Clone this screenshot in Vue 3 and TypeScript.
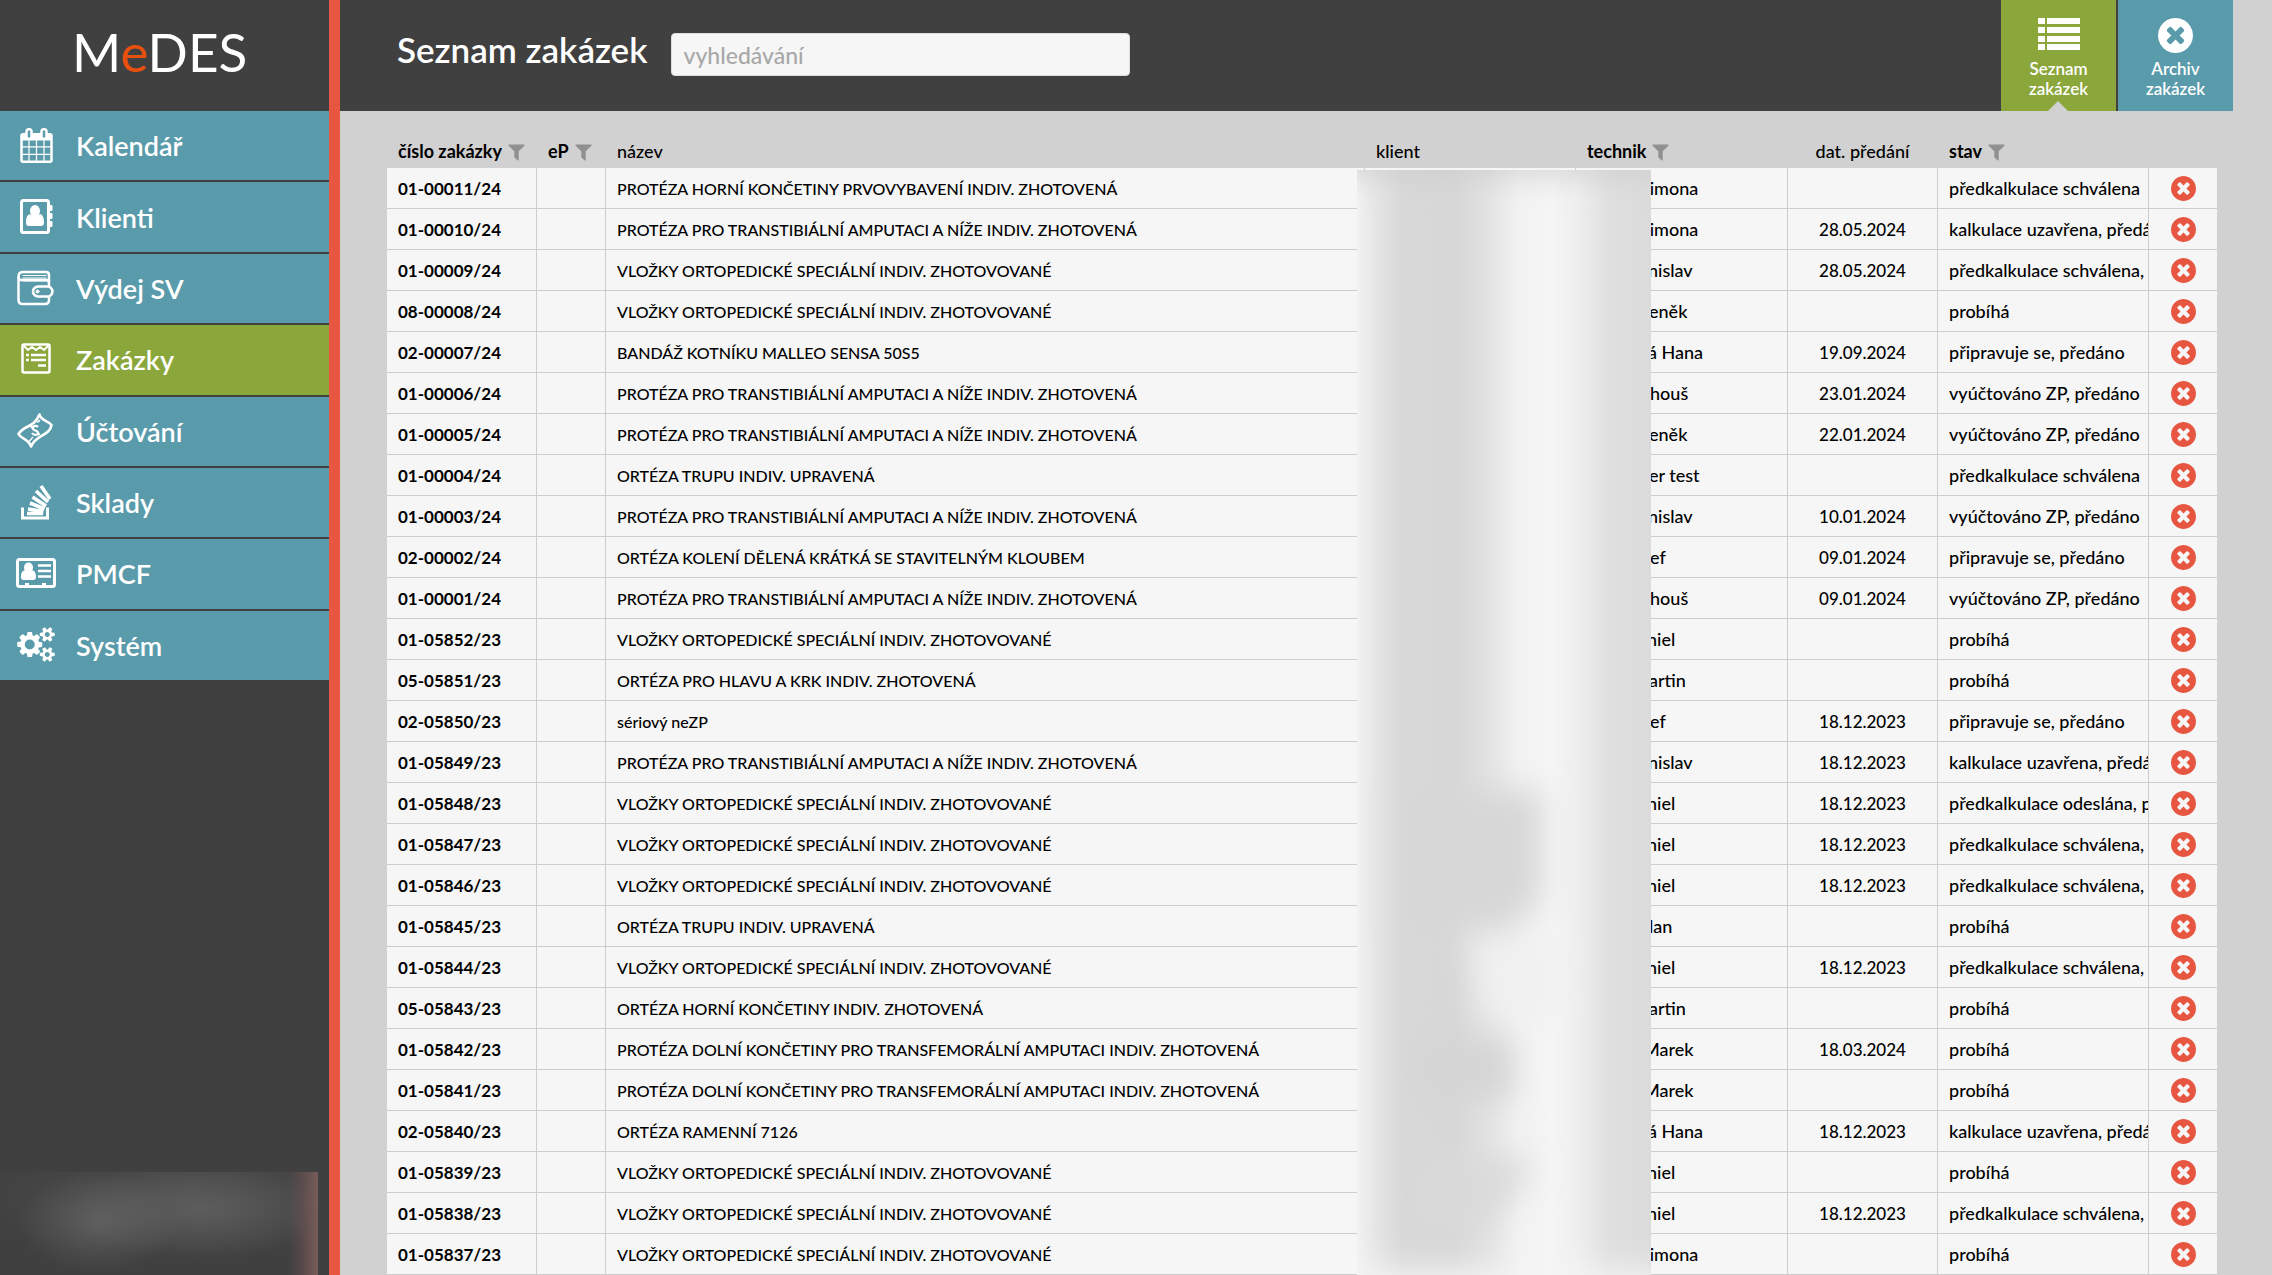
<script setup lang="ts">
import { ref } from 'vue'

interface Order {
  id: string
  name: string
  technician: string
  handover: string
  status: string
}

const TRANSTIBIAL = 'PROTÉZA PRO TRANSTIBIÁLNÍ AMPUTACI A NÍŽE INDIV. ZHOTOVENÁ'
const TRANSFEMORAL = 'PROTÉZA DOLNÍ KONČETINY PRO TRANSFEMORÁLNÍ AMPUTACI INDIV. ZHOTOVENÁ'
const INSOLES = 'VLOŽKY ORTOPEDICKÉ SPECIÁLNÍ INDIV. ZHOTOVOVANÉ'

// Width of the masked surname in front of each visible technician name.
const surnameWidth: Record<string, number> = {
  Simona: 53,
  nislav: 61,
  eněk: 62,
  'á Hana': 61,
  houš: 63,
  'er test': 62,
  ef: 63,
  niel: 60,
  artin: 62,
  lan: 62,
  Marek: 56,
}

const rows: [string, string, string, string, string][] = [
  ['01-00011/24', 'PROTÉZA HORNÍ KONČETINY PRVOVYBAVENÍ INDIV. ZHOTOVENÁ', 'Simona', '', 'předkalkulace schválena'],
  ['01-00010/24', TRANSTIBIAL, 'Simona', '28.05.2024', 'kalkulace uzavřena, předáno'],
  ['01-00009/24', INSOLES, 'nislav', '28.05.2024', 'předkalkulace schválena, předáno'],
  ['08-00008/24', INSOLES, 'eněk', '', 'probíhá'],
  ['02-00007/24', 'BANDÁŽ KOTNÍKU MALLEO SENSA 50S5', 'á Hana', '19.09.2024', 'připravuje se, předáno'],
  ['01-00006/24', TRANSTIBIAL, 'houš', '23.01.2024', 'vyúčtováno ZP, předáno'],
  ['01-00005/24', TRANSTIBIAL, 'eněk', '22.01.2024', 'vyúčtováno ZP, předáno'],
  ['01-00004/24', 'ORTÉZA TRUPU INDIV. UPRAVENÁ', 'er test', '', 'předkalkulace schválena'],
  ['01-00003/24', TRANSTIBIAL, 'nislav', '10.01.2024', 'vyúčtováno ZP, předáno'],
  ['02-00002/24', 'ORTÉZA KOLENÍ DĚLENÁ KRÁTKÁ SE STAVITELNÝM KLOUBEM', 'ef', '09.01.2024', 'připravuje se, předáno'],
  ['01-00001/24', TRANSTIBIAL, 'houš', '09.01.2024', 'vyúčtováno ZP, předáno'],
  ['01-05852/23', INSOLES, 'niel', '', 'probíhá'],
  ['05-05851/23', 'ORTÉZA PRO HLAVU A KRK INDIV. ZHOTOVENÁ', 'artin', '', 'probíhá'],
  ['02-05850/23', 'sériový neZP', 'ef', '18.12.2023', 'připravuje se, předáno'],
  ['01-05849/23', TRANSTIBIAL, 'nislav', '18.12.2023', 'kalkulace uzavřena, předáno'],
  ['01-05848/23', INSOLES, 'niel', '18.12.2023', 'předkalkulace odeslána, předáno'],
  ['01-05847/23', INSOLES, 'niel', '18.12.2023', 'předkalkulace schválena, předáno'],
  ['01-05846/23', INSOLES, 'niel', '18.12.2023', 'předkalkulace schválena, předáno'],
  ['01-05845/23', 'ORTÉZA TRUPU INDIV. UPRAVENÁ', 'lan', '', 'probíhá'],
  ['01-05844/23', INSOLES, 'niel', '18.12.2023', 'předkalkulace schválena, předáno'],
  ['05-05843/23', 'ORTÉZA HORNÍ KONČETINY INDIV. ZHOTOVENÁ', 'artin', '', 'probíhá'],
  ['01-05842/23', TRANSFEMORAL, 'Marek', '18.03.2024', 'probíhá'],
  ['01-05841/23', TRANSFEMORAL, 'Marek', '', 'probíhá'],
  ['02-05840/23', 'ORTÉZA RAMENNÍ 7126', 'á Hana', '18.12.2023', 'kalkulace uzavřena, předáno'],
  ['01-05839/23', INSOLES, 'niel', '', 'probíhá'],
  ['01-05838/23', INSOLES, 'niel', '18.12.2023', 'předkalkulace schválena, předáno'],
  ['01-05837/23', INSOLES, 'Simona', '', 'probíhá'],
]
const orders: Order[] = rows.map(([id, name, technician, handover, status]) => ({
  id, name, technician, handover, status,
}))

const columns = [
  { key: 'id', label: 'číslo zakázky', filter: true },
  { key: 'ep', label: 'eP', filter: true },
  { key: 'name', label: 'název', filter: false },
  { key: 'client', label: 'klient', filter: false },
  { key: 'technician', label: 'technik', filter: true },
  { key: 'handover', label: 'dat. předání', filter: false },
  { key: 'status', label: 'stav', filter: true },
]

const menu = ['Kalendář', 'Klienti', 'Výdej SV', 'Zakázky', 'Účtování', 'Sklady', 'PMCF', 'Systém']
const active = ref('Zakázky')
const query = ref('')

const timesCircle =
  'M1277 1122q0-26-19-45l-181-181 181-181q19-19 19-45 0-27-19-46l-90-90q-19-19-46-19-26 0-45 19l-181 181-181-181q-19-19-45-19-27 0-46 19l-90 90q-19 19-19 46 0 26 19 45l181 181-181 181q-19 19-19 45 0 27 19 46l90 90q19 19 46 19 26 0 45-19l181-181 181 181q19 19 45 19 27 0 46-19l90-90q19-19 19-46zm387-226q0 209-103 385.5t-279.5 279.5-385.5 103-385.5-103-279.5-279.5-103-385.5 103-385.5 279.5-279.5 385.5-103 385.5 103 279.5 279.5 103 385.5z'
const funnel =
  'M1595 295q17 41-14 70l-493 493v742q0 42-39 59-13 5-25 5-27 0-45-19l-256-256q-19-19-19-45v-486l-493-493q-31-29-14-70 17-39 59-39h1280q42 0 59 39z'
const calendar =
  'M192 1664h288v-288h-288v288zm352 0h320v-288h-320v288zm-352-352h288v-320h-288v320zm352 0h320v-320h-320v320zm-352-384h288v-288h-288v288zm736 736h320v-288h-320v288zm-384-736h320v-288h-320v288zm768 736h288v-288h-288v288zm-384-352h320v-320h-320v320zm-352-864v-288q0-13-9.5-22.5t-22.5-9.5h-64q-13 0-22.5 9.5t-9.5 22.5v288q0 13 9.5 22.5t22.5 9.5h64q13 0 22.5-9.5t9.5-22.5zm736 864h288v-320h-288v320zm-384-384h320v-288h-320v288zm384 0h288v-288h-288v288zm32-480v-288q0-13-9.5-22.5t-22.5-9.5h-64q-13 0-22.5 9.5t-9.5 22.5v288q0 13 9.5 22.5t22.5 9.5h64q13 0 22.5-9.5t9.5-22.5zm384-64v1280q0 52-38 90t-90 38h-1408q-52 0-90-38t-38-90v-1280q0-52 38-90t90-38h128v-96q0-66 47-113t113-47h64q66 0 113 47t47 113v96h384v-96q0-66 47-113t113-47h64q66 0 113 47t47 113v96h128q52 0 90 38t38 90z'
const cogs =
  'M896 896q0-106-75-181t-181-75-181 75-75 181 75 181 181 75 181-75 75-181zm768 512q0-52-38-90t-90-38-90 38-38 90q0 53 37.5 90.5t90.5 37.5 90.5-37.5 37.5-90.5zm0-1024q0-52-38-90t-90-38-90 38-38 90q0 53 37.5 90.5t90.5 37.5 90.5-37.5 37.5-90.5zm-384 421v185q0 10-7 19.5t-16 10.5l-155 24q-11 35-32 76 34 48 90 115 7 11 7 20 0 12-7 19-23 30-82.5 89.5t-78.5 59.5q-11 0-21-7l-115-90q-37 19-77 31-11 108-23 155-7 24-30 24h-186q-11 0-20-7.5t-10-17.5l-23-153q-34-10-75-31l-118 89q-7 7-20 7-11 0-21-8-144-133-144-160 0-9 7-19 10-14 41-53t47-61q-23-44-35-82l-152-24q-10-1-17-9.5t-7-19.5v-185q0-10 7-19.5t16-10.5l155-24q11-35 32-76-34-48-90-115-7-11-7-20 0-12 7-20 22-30 82-89t79-59q11 0 21 7l115 90q34-18 77-32 11-108 23-154 7-24 30-24h186q11 0 20 7.5t10 17.5l23 153q34 10 75 31l118-89q8-7 20-7 11 0 21 8 144 133 144 160 0 8-7 19-12 16-42 54t-45 60q23 48 34 82l152 23q10 2 17 10.5t7 19.5zm640 533v140q0 16-149 31-12 27-30 52 51 113 51 138 0 4-4 7-122 71-124 71-8 0-46-47t-52-68q-20 2-30 2t-30-2q-14 21-52 68t-46 47q-2 0-124-71-4-3-4-7 0-25 51-138-18-25-30-52-149-15-149-31v-140q0-16 149-31 13-29 30-52-51-113-51-138 0-4 4-7 4-2 35-20t59-34 30-16q8 0 46 46.5t52 67.5q20-2 30-2t30 2q51-71 92-112l6-2q4 0 124 70 4 3 4 7 0 25-51 138 17 23 30 52 149 15 149 31zm0-1024v140q0 16-149 31-12 27-30 52 51 113 51 138 0 4-4 7-122 71-124 71-8 0-46-47t-52-68q-20 2-30 2t-30-2q-14 21-52 68t-46 47q-2 0-124-71-4-3-4-7 0-25 51-138-18-25-30-52-149-15-149-31v-140q0-16 149-31 13-29 30-52-51-113-51-138 0-4 4-7 4-2 35-20t59-34 30-16q8 0 46 46.5t52 67.5q20-2 30-2t30 2q51-71 92-112l6-2q4 0 124 70 4 3 4 7 0 25-51 138 17 23 30 52 149 15 149 31z'
</script>

<template>
  <div class="app">
    <aside class="sidebar">
      <div class="logo">M<span class="logo-accent">e</span>DES</div>
      <nav class="menu">
        <a
          v-for="item in menu"
          :key="item"
          href="#"
          class="menu-item"
          :class="{ active: item === active }"
          @click.prevent="active = item"
        >
          <svg class="menu-icon" viewBox="0 0 40 36" aria-hidden="true">
            <svg v-if="item === 'Kalendář'" x="3" y="0" width="35" height="35" viewBox="0 0 1792 1792">
              <path :d="calendar" fill="currentColor" />
            </svg>
            <g v-else-if="item === 'Klienti'" fill="currentColor">
              <rect x="5.5" y="1.5" width="27" height="32" rx="2" fill="none" stroke="currentColor" stroke-width="3" />
              <rect x="33" y="6" width="3.5" height="6" rx="1" />
              <rect x="33" y="14" width="3.5" height="6" rx="1" />
              <rect x="33" y="22" width="3.5" height="6" rx="1" />
              <ellipse cx="19" cy="12" rx="5" ry="6" />
              <path d="M14 15c-3 1-4 4-4 8 0 3 1 4 3 4h12c2 0 3-1 3-4 0-4-1-7-4-8-3 3-7 3-10 0z" />
            </g>
            <g v-else-if="item === 'Výdej SV'" fill="none" stroke="currentColor" stroke-width="2.5" stroke-linecap="round">
              <path d="M33 16V13q0-3-3-3H5q-2.500 0-2.500-3V30q0 4 4 4H29q4 0 4-4V27" />
              <path d="M2.500 7q0-5 4-5H30q3 0 3 3v7" />
              <path d="M7 5.500H30M7 8H30M7 11H30" stroke-width="1.200" />
              <path d="M22 16.500H33q3.500 2 3.500 5t-3.500 5H22q-5-1-5-5t5-5z" />
              <circle cx="21.500" cy="21.500" r="1.500" fill="currentColor" stroke-width="1" />
            </g>
            <g v-else-if="item === 'Zakázky'" fill="none" stroke="currentColor" stroke-width="2.5">
              <rect x="6.500" y="2.500" width="27" height="28" rx="1.500" />
              <path d="M8 4l4 4 4-3 4 3 4-3 4 3 4-4" stroke-width="2" />
              <path d="M10 13h3M15 13h15M10 18h3M15 18h15M22 23.500h8" />
            </g>
            <g v-else-if="item === 'Účtování'" fill="none" stroke="currentColor" stroke-width="2.600" stroke-linejoin="round">
              <path d="M23.500 1.500C25 8 33 8 35.500 12 34 23 20 21 15 33.500 13 26 5 26 2.500 21 8 12 18 15 23.500 1.500z" />
              <path d="M22 14c-2-2-6-1-5 2 1 2 5 1 5 4 0 2-4 3-6 0M15 13l1.500 2M22 20l1.500 2" stroke-width="2.200" />
              <path d="M13 28c2-1 2-2 4-4M21 9c2 0 2-1 3-2" stroke-width="1.500" />
            </g>
            <g v-else-if="item === 'Sklady'" fill="none" stroke="currentColor" stroke-width="3.600">
              <path d="M6.500 22.500V33h25V22.500" stroke-width="3" />
              <path d="M11 28.500h16M12 24l15.500 2.500M14 18l14.500 6M16.500 12l13.500 9M20 6l12 11M25 1l9 13" />
            </g>
            <g v-else-if="item === 'PMCF'" fill="currentColor">
              <rect x="1.500" y="3.500" width="37" height="27" rx="2" fill="none" stroke="currentColor" stroke-width="3" />
              <ellipse cx="12.500" cy="11.500" rx="4.500" ry="5" />
              <path d="M9 14c-3 1-4 3-4 7 0 2 1 3 2.500 3h10c1.500 0 2.500-1 2.500-3 0-4-1-6-4-7-2 2-5 2-7 0z" />
              <path d="M22 9.500h13M22 15h13M22 20.500h13" stroke="currentColor" stroke-width="2.500" />
              <rect x="9" y="27" width="4" height="3" />
              <rect x="26" y="27" width="4" height="3" />
            </g>
            <svg v-else x="1" y="0" width="38" height="35" viewBox="0 0 1920 1792">
              <path :d="cogs" fill="currentColor" />
            </svg>
          </svg>
          <span>{{ item }}</span>
        </a>
      </nav>
      <div class="user-mask" aria-hidden="true"></div>
    </aside>

    <main class="content">
      <header class="topbar">
        <h1 class="title">Seznam zakázek</h1>
        <input v-model="query" class="search" type="search" placeholder="vyhledávání" aria-label="vyhledávání" />
        <div class="tabs">
          <a href="#" class="tab current">
            <svg class="tab-icon" width="42" height="35" viewBox="0 0 42 35" fill="currentColor" aria-hidden="true">
              <path d="M0 0h7v6H0zM9 0h33v6H9zM0 9h7v6H0zM9 9h33v6H9zM0 18h7v6H0zM9 18h33v6H9zM0 26h7v6H0zM9 26h33v6H9z" />
            </svg>
            <span>Seznam<br />zakázek</span>
          </a>
          <a href="#" class="tab">
            <svg class="tab-icon" width="35" height="35" viewBox="128 128 1536 1536" fill="currentColor" aria-hidden="true">
              <path :d="timesCircle" />
            </svg>
            <span>Archiv<br />zakázek</span>
          </a>
        </div>
      </header>

      <section class="list">
        <table class="orders">
          <colgroup>
            <col class="c-id" />
            <col class="c-ep" />
            <col />
            <col class="c-client" />
            <col class="c-tech" />
            <col class="c-date" />
            <col class="c-status" />
            <col class="c-action" />
          </colgroup>
          <thead>
            <tr>
              <th v-for="c in columns" :key="c.key" scope="col" :class="[c.key, { filterable: c.filter }]">
                {{ c.label }}<button v-if="c.filter" type="button" class="filter" :aria-label="'filtr ' + c.label">
                  <svg width="17" height="17" viewBox="192 220 1408 1480" fill="currentColor"><path :d="funnel" /></svg>
                </button>
              </th>
              <td></td>
            </tr>
          </thead>
          <tbody>
            <tr v-for="o in orders" :key="o.id">
              <td class="id">{{ o.id }}</td>
              <td></td>
              <td class="name">{{ o.name }}</td>
              <td></td>
              <td class="technician">
                <span :style="{ paddingLeft: surnameWidth[o.technician] + 'px' }">{{ o.technician }}</span>
              </td>
              <td class="handover">{{ o.handover }}</td>
              <td>{{ o.status }}</td>
              <td class="action">
                <button type="button" class="remove" :aria-label="'odstranit ' + o.id">
                  <svg width="25" height="25" viewBox="128 128 1536 1536" fill="currentColor"><path :d="timesCircle" /></svg>
                </button>
              </td>
            </tr>
          </tbody>
        </table>
        <div class="mask" aria-hidden="true">
          <svg width="294" height="1105" viewBox="0 0 294 1105">
            <defs>
              <filter id="soft" x="-50%" y="-50%" width="200%" height="200%"><feGaussianBlur stdDeviation="16" /></filter>
            </defs>
            <g filter="url(#soft)">
              <path d="M50 620H184V730L150 760H50z" fill="#d7d7d7" />
              <path d="M112 765H200V850H130z" fill="#f1f1f1" />
              <path d="M60 868H155V930H60z" fill="#d5d5d5" />
              <path d="M60 990H140L170 980V1010L120 1060H60z" fill="#dadada" />
              <path d="M-20 1100H320V1140H-20z" fill="#f4f4f4" />
              <path d="M-20 -24H320V2H-20z" fill="#cccccc" />
            </g>
          </svg>
        </div>
      </section>
    </main>
  </div>
</template>

<style>
body {
  margin: 0;
  background: #d1d1d1;
}
</style>

<style scoped>
.app {
  display: flex;
  min-height: 100vh;
  font-family: Lato, "Open Sans", sans-serif;
  font-size: 18px;
  font-weight: 500;
  color: #000;
  background: #d1d1d1;
}
a {
  color: inherit;
  text-decoration: none;
}
button {
  padding: 0;
  border: 0;
  background: none;
  cursor: pointer;
}
svg {
  display: block;
}

.sidebar {
  box-sizing: border-box;
  flex: 0 0 340px;
  display: flex;
  flex-direction: column;
  background: #404040;
  border-right: 11px solid #e65641;
}
.logo {
  height: 111px;
  padding-left: 72px;
  line-height: 104px;
  box-sizing: border-box;
  font-size: 53px;
  font-weight: 400;
  color: #fff;
}
.logo-accent {
  color: #e8500f;
}
.menu {
  display: flex;
  flex-direction: column;
  gap: 2px;
  height: 569px;
}
.menu-item {
  flex: 1;
  display: flex;
  align-items: center;
  gap: 20px;
  padding-left: 16px;
  font-size: 27px;
  font-weight: 600;
  color: #fff;
  background: #5a9bab;
}
.menu-item.active {
  background: #8ba63b;
}
.menu-icon {
  width: 40px;
  height: 36px;
}
.user-mask {
  width: 318px;
  height: 103px;
  margin-top: auto;
  background:
    linear-gradient(90deg, transparent 288px, #78555566 302px, #80605cdd 318px),
    radial-gradient(ellipse 80px 50px at 98px 50px, #6a6a6aaa, transparent),
    radial-gradient(ellipse 130px 50px at 200px 38px, #666666aa, transparent),
    radial-gradient(ellipse 220px 60px at 180px 24px, #55555599, transparent),
    #404040;
}

.content {
  flex: 1;
  min-width: 0;
}
.topbar {
  display: flex;
  align-items: center;
  height: 111px;
  margin-right: 39px;
  padding-left: 57px;
  background: #404040;
}
.title {
  margin: 0 24px 14px 0;
  font-size: 35px;
  font-weight: 600;
  color: #fff;
  white-space: nowrap;
}
.search {
  box-sizing: border-box;
  width: 459px;
  height: 43px;
  margin-bottom: 2px;
  padding: 0 11px;
  border: 1px solid #ddd;
  border-radius: 4px;
  font: inherit;
  font-size: 23px;
  background: #f6f6f6;
}
.search::placeholder {
  color: #a8a8a8;
}
.tabs {
  display: flex;
  gap: 2px;
  margin-left: auto;
  align-self: stretch;
}
.tab {
  box-sizing: border-box;
  position: relative;
  display: flex;
  flex-direction: column;
  align-items: center;
  gap: 6px;
  width: 115px;
  padding-top: 18px;
  font-size: 17px;
  font-weight: 600;
  line-height: 20px;
  text-align: center;
  color: #fff;
  background: #5a9bab;
}
.tab.current {
  background: #8ba63b;
}
.tab.current::after {
  content: "";
  position: absolute;
  bottom: 0;
  left: 47px;
  border: 10px solid transparent;
  border-top: 0;
  border-bottom-color: #d1d1d1;
}

.list {
  position: relative;
  padding: 0 55px 0 47px;
}
.orders {
  width: 100%;
  table-layout: fixed;
  border-spacing: 0;
}
.c-id { width: 149px; }
.c-ep { width: 69px; }
.c-client { width: 211px; }
.c-tech { width: 212px; }
.c-date { width: 150px; }
.c-status { width: 211px; }
.c-action { width: 69px; }
.orders th {
  height: 57px;
  padding: 22px 0 0 11px;
  box-sizing: border-box;
  border-left: 1px solid transparent;
  font-weight: 500;
  text-align: left;
  white-space: nowrap;
}
.orders th:first-child {
  border-left: 0;
}
.orders th.filterable {
  font-weight: 700;
}
.orders th.handover {
  padding-left: 0;
  text-align: center;
}
.filter {
  display: inline-block;
  margin-left: 6px;
  vertical-align: -3px;
  color: #909090;
}
.orders tbody td {
  box-sizing: border-box;
  height: 41px;
  padding: 0 0 0 11px;
  overflow: hidden;
  white-space: nowrap;
  background: #f6f6f6;
  border-bottom: 1px solid #cdcdcd;
  border-left: 1px solid #cdcdcd;
}
.orders tbody td:first-child {
  border-left: 0;
}
.orders tbody td.id {
  font-size: 17px;
  font-weight: 700;
}
.orders tbody td.name {
  font-size: 16px;
}
.orders tbody td.handover {
  font-size: 17px;
}
.orders tbody td.handover,
.orders tbody td.action {
  padding: 0;
  text-align: center;
}
.remove {
  display: block;
  margin: 0 auto;
  color: #e65641;
}
.mask {
  position: absolute;
  top: 59px;
  right: 621px;
  bottom: 0;
  width: 294px;
  overflow: hidden;
  background: linear-gradient(90deg, #f2f2f2, #e6e6e6 18px, #d8d8d8 46px, #d7d7d7 98px, #e2e2e2 130px, #f2f2f2 162px, #f5f5f5 195px, #eeeeee 222px, #dfdfdf 252px, #dbdbdb);
}
</style>
